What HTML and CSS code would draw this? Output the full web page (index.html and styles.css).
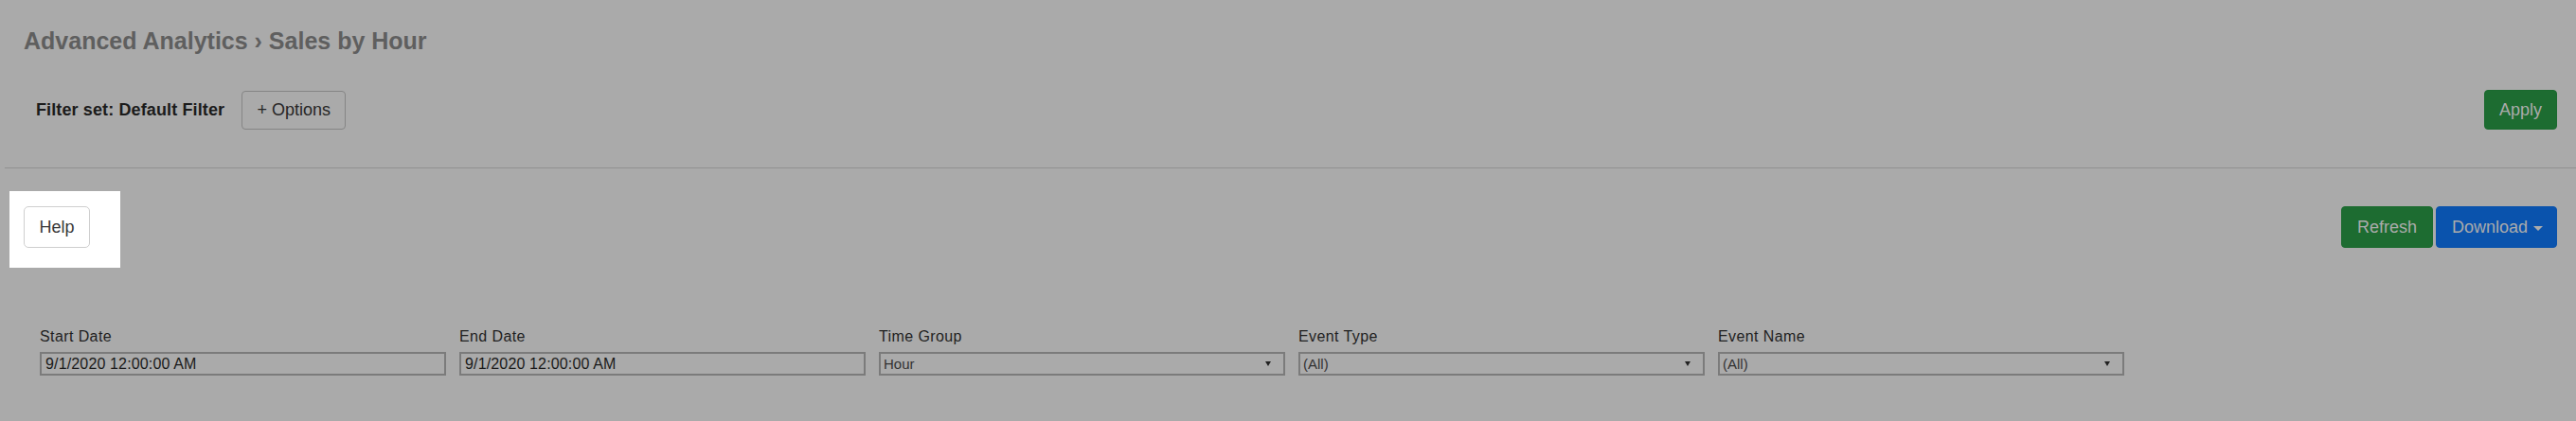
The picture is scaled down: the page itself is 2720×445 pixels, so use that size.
FILE: index.html
```html
<!DOCTYPE html>
<html lang="en">
<head>
<meta charset="utf-8">
<title>Sales by Hour</title>
<link rel="stylesheet" href="styles.css">
</head>
<body>
<div class="page">
  <h1 class="title">Advanced Analytics › Sales by Hour</h1>
  <div class="filterbar">
    <span class="filterset">Filter set: Default Filter</span>
    <button class="btn btn-outline">+ Options</button>
    <button class="btn btn-green btn-apply">Apply</button>
  </div>
  <div class="divider"></div>
  <div class="toolbar">
    <div class="help-spot"><button class="btn btn-help">Help</button></div>
    <div class="actions">
      <button class="btn btn-green btn-refresh">Refresh</button>
      <button class="btn btn-blue btn-download">Download<span class="caret"></span></button>
    </div>
  </div>
  <div class="filters">
    <div class="field">
      <div class="label">Start Date</div>
      <div class="input">9/1/2020 12:00:00 AM</div>
    </div>
    <div class="field">
      <div class="label">End Date</div>
      <div class="input">9/1/2020 12:00:00 AM</div>
    </div>
    <div class="field">
      <div class="label">Time Group</div>
      <div class="input select"><span>Hour</span><span class="tri"></span></div>
    </div>
    <div class="field">
      <div class="label">Event Type</div>
      <div class="input select"><span>(All)</span><span class="tri"></span></div>
    </div>
    <div class="field">
      <div class="label">Event Name</div>
      <div class="input select"><span>(All)</span><span class="tri"></span></div>
    </div>
  </div>
</div>
</body>
</html>
```
FILE: styles.css
```css
html, body {
  margin: 0;
  padding: 0;
  background: #aaaaaa;
  font-family: "Liberation Sans", Arial, sans-serif;
}

.page {
  width: 2720px;
  height: 445px;
  overflow: hidden;
}

.title {
  margin: 0;
  padding: 28px 0 0 25px;
  font-size: 25px;
  line-height: 30px;
  font-weight: bold;
  color: #5f5f5f;
}

.filterbar {
  display: flex;
  align-items: center;
  height: 42px;
  margin-top: 37px;
  padding: 0 20px 0 38px;
}

.filterset {
  font-size: 18px;
  font-weight: bold;
  letter-spacing: 0.12px;
  color: #1b1b1b;
}

.btn {
  font-family: "Liberation Sans", Arial, sans-serif;
  font-size: 18px;
  box-sizing: border-box;
  border-radius: 4px;
  padding: 0;
  cursor: pointer;
}

.btn-outline {
  margin-left: 18px;
  width: 110px;
  height: 41px;
  border: 1px solid #858585;
  background: transparent;
  color: #262626;
}

.btn-green {
  background: #1d6c31;
  border: 1px solid #1b6a2f;
  color: #ababab;
}

.btn-blue {
  background: #0a53ad;
  border: 1px solid #0a52ab;
  color: #ababab;
}

.btn-apply {
  margin-left: auto;
  width: 77px;
  height: 42px;
}

.divider {
  height: 1px;
  margin: 40px 0 0 5px;
  background: #919191;
}

.toolbar {
  display: flex;
  align-items: flex-start;
  justify-content: space-between;
  margin-top: 24px;
  padding: 0 20px 0 10px;
}

.help-spot {
  background: #ffffff;
  padding: 16px 32px 21px 15px;
}

.btn-help {
  display: block;
  width: 70px;
  height: 44px;
  border: 1px solid #cfcfcf;
  border-radius: 5px;
  background: #ffffff;
  color: #383838;
}

.actions {
  display: flex;
  gap: 3px;
  margin-top: 16px;
}

.btn-refresh {
  width: 97px;
  height: 44px;
}

.btn-download {
  display: flex;
  align-items: center;
  width: 128px;
  height: 44px;
  padding: 0 14px 0 16px;
}

.caret {
  width: 0;
  height: 0;
  margin-left: 6px;
  margin-top: 2px;
  border-left: 5px solid transparent;
  border-right: 5px solid transparent;
  border-top: 5px solid #ababab;
}

.filters {
  display: flex;
  gap: 14px;
  margin-top: 63px;
  padding-left: 42px;
}

.field {
  width: 429px;
}

.label {
  font-size: 16px;
  line-height: 20px;
  letter-spacing: 0.4px;
  color: #1f1f1f;
}

.input {
  box-sizing: border-box;
  height: 25px;
  margin-top: 6px;
  border: 2px solid #7b7b7b;
  padding: 0 4px;
  font-size: 16px;
  line-height: 21px;
  letter-spacing: 0.15px;
  color: #1a1a1a;
}

.select {
  display: flex;
  align-items: center;
  justify-content: space-between;
  padding: 0 13px 0 3px;
  font-size: 15px;
  letter-spacing: 0;
  color: #333333;
}

.tri {
  width: 0;
  height: 0;
  border-left: 3.5px solid transparent;
  border-right: 3.5px solid transparent;
  border-top: 5px solid #222222;
}
```
